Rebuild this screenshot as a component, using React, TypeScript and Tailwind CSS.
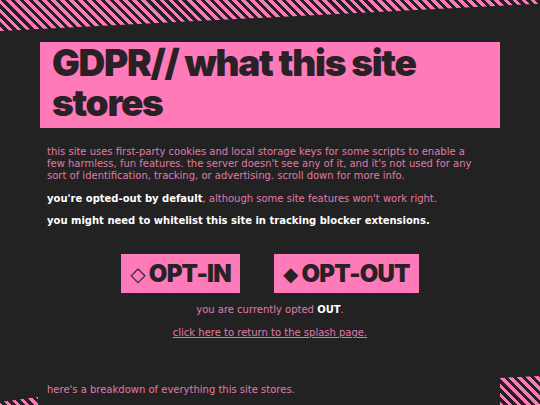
import React from 'react';

const stripes = {
  backgroundImage:
    'repeating-linear-gradient(45deg, #ff78b8 0px, #ff78b8 3.4px, #222222 3.4px, #222222 6.4px)',
};

const OptButton = ({ filled, children }: { filled?: boolean; children: React.ReactNode }) => (
  <button className="flex h-[39px] items-center gap-1 bg-[#ff7ab8] px-[9px] text-[24px] font-black tracking-[-0.8px] text-[#2a2127] [font-family:Inter,sans-serif]">
    <span className="text-[20px] [font-family:'DejaVu_Sans',sans-serif]">{filled ? '◆' : '◇'}</span>
    {children}
  </button>
);

export default function App() {
  return (
    <div
      className="relative h-[405px] w-[540px] overflow-hidden bg-[#222222] [font-family:'DejaVu_Sans',sans-serif]"
      style={{
        backgroundImage:
          'linear-gradient(#242424 1px, transparent 1px), linear-gradient(90deg, #242424 1px, transparent 1px)',
        backgroundSize: '34px 34px',
      }}
    >
      {/* slanted stripe band across the top */}
      <div
        className="h-[31px] w-full"
        style={{ ...stripes, clipPath: 'polygon(0 0, 100% 0, 100% 12%, 0 100%)' }}
      />

      <main className="mx-auto mt-[11px] w-[460px]">
        <h1 className="bg-[#ff7ab8] px-3 pt-[1px] pb-[5px] text-[37px] leading-[40px] font-black tracking-[-1.3px] text-[#2a2127] [font-family:Inter,sans-serif]">
          GDPR// what this site stores
        </h1>

        <div className="pt-[18px] pr-[16px] pl-[7px] text-[10px] leading-[12px] text-[#e07aaa]">
          <p>
            this site uses first-party cookies and local storage keys for some scripts to enable a few
            harmless, fun features. the server doesn't see any of it, and it's not used for any sort of
            identification, tracking, or advertising. scroll down for more info.
          </p>
          <p className="mt-[11px]">
            <b className="text-white">you're opted-out by default</b>, although some site features won't
            work right.
          </p>
          <p className="mt-[10px] font-bold text-white">
            you might need to whitelist this site in tracking blocker extensions.
          </p>
        </div>

        <div className="mt-[27px] flex justify-center gap-[34px]">
          <OptButton>OPT-IN</OptButton>
          <OptButton filled>OPT-OUT</OptButton>
        </div>

        <p className="mt-[11px] text-center text-[10px] leading-[12px] text-[#e07aaa]">
          you are currently opted <b className="text-white">OUT</b>.
        </p>
        <p className="mt-[11px] text-center text-[10px] leading-[12px] text-[#e07aaa] underline">
          click here to return to the splash page.
        </p>

        <p className="mt-[45px] px-[7px] text-[10px] leading-[12px] text-[#e07aaa]">
          here's a breakdown of everything this site stores.
        </p>
      </main>

      {/* striped corners peeking in at the bottom */}
      <div
        className="absolute top-[375px] left-[500px] h-[40px] w-[60px]"
        style={{ ...stripes, clipPath: 'polygon(0 3px, 100% 0, 100% 100%, 0 100%)' }}
      />
      <div
        className="absolute top-[397px] left-0 h-[10px] w-[38px]"
        style={{ ...stripes, clipPath: 'polygon(0 5px, 100% 0, 100% 100%, 0 100%)' }}
      />
    </div>
  );
}
